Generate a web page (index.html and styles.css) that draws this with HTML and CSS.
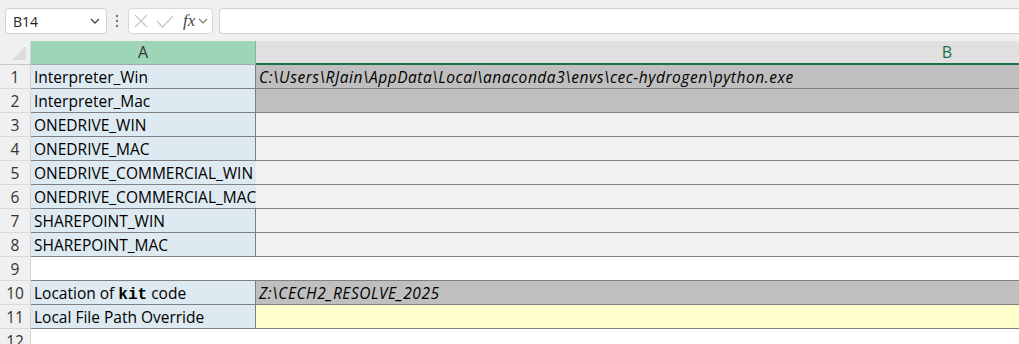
FILE: index.html
```html
<!DOCTYPE html>
<html lang="en">
  <head>
    <meta charset="utf-8">
    <title>Settings sheet</title>
    <link rel="stylesheet" href="styles.css">
  </head>
  <body>
    <!-- name box + formula bar -->
    <div class="toolbar">
      <div class="namebox">
        <span>B14</span>
        <svg class="chev" width="10" height="6" viewBox="0 0 10 6"><path d="M1 1l4 4 4-4" fill="none" stroke="#444" stroke-width="1.3"/></svg>
      </div>
      <svg class="grip" width="4" height="14" viewBox="0 0 4 14"><circle cx="2" cy="2" r="1.2" fill="#777"/><circle cx="2" cy="7" r="1.2" fill="#777"/><circle cx="2" cy="12" r="1.2" fill="#777"/></svg>
      <div class="fnbox">
        <svg width="14" height="14" viewBox="0 0 14 14"><path d="M1 1l12 12M13 1L1 13" stroke="#c4c4c4" stroke-width="1.2"/></svg>
        <svg width="18" height="13" viewBox="0 0 18 13"><path d="M1 6l5.5 6L17 1" fill="none" stroke="#c4c4c4" stroke-width="1.2"/></svg>
        <span class="fx">fx</span>
        <svg width="10" height="6" viewBox="0 0 10 6"><path d="M1 1l4 4 4-4" fill="none" stroke="#777" stroke-width="1.1"/></svg>
      </div>
      <div class="formula"></div>
    </div>

    <div class="sheet">
      <div class="row head">
        <div class="rh corner"><svg width="14" height="14" viewBox="0 0 14 14"><path d="M14 0v14H0z" fill="#dcdcdc"/></svg></div>
        <div class="ch a">A</div>
        <div class="ch b sel">B</div>
      </div>
      <div class="row">
        <div class="rh">1</div>
        <div class="cell a">Interpreter_Win</div>
        <div class="cell b grey path">C:\Users\RJain\AppData\Local\anaconda3\envs\cec-hydrogen\python.exe</div>
      </div>
      <div class="row">
        <div class="rh">2</div>
        <div class="cell a">Interpreter_Mac</div>
        <div class="cell b grey"></div>
      </div>
      <div class="row">
        <div class="rh">3</div>
        <div class="cell a">ONEDRIVE_WIN</div>
        <div class="cell b"></div>
      </div>
      <div class="row">
        <div class="rh">4</div>
        <div class="cell a">ONEDRIVE_MAC</div>
        <div class="cell b"></div>
      </div>
      <div class="row">
        <div class="rh">5</div>
        <div class="cell a spill">ONEDRIVE_COMMERCIAL_WIN</div>
        <div class="cell b"></div>
      </div>
      <div class="row">
        <div class="rh">6</div>
        <div class="cell a spill">ONEDRIVE_COMMERCIAL_MAC</div>
        <div class="cell b"></div>
      </div>
      <div class="row">
        <div class="rh">7</div>
        <div class="cell a">SHAREPOINT_WIN</div>
        <div class="cell b"></div>
      </div>
      <div class="row">
        <div class="rh">8</div>
        <div class="cell a">SHAREPOINT_MAC</div>
        <div class="cell b"></div>
      </div>
      <div class="row">
        <div class="rh">9</div>
        <div class="cell a blank"></div>
        <div class="cell b blank"></div>
      </div>
      <div class="row">
        <div class="rh">10</div>
        <div class="cell a">Location of <code>kit</code> code</div>
        <div class="cell b grey path">Z:\CECH2_RESOLVE_2025</div>
      </div>
      <div class="row">
        <div class="rh">11</div>
        <div class="cell a">Local File Path Override</div>
        <div class="cell b yellow"></div>
      </div>
      <div class="row">
        <div class="rh">12</div>
        <div class="cell a blank nb"></div>
        <div class="cell b blank nb"></div>
      </div>
    </div>
  </body>
</html>
```

FILE: styles.css
```css
body {
  margin: 0;
  background-color: #fff;
  font-family: "Open Sans", sans-serif;
  color: #000;
  overflow: hidden;
}

/* top bar */
.toolbar {
  display: flex;
  align-items: flex-start;
  height: 41px;
  padding: 8px 0 0 5px;
  box-sizing: border-box;
  background-color: #f0f0f0;
}

.namebox {
  display: flex;
  align-items: center;
  justify-content: space-between;
  width: 102px;
  height: 26px;
  box-sizing: border-box;
  padding: 0 6px 0 7px;
  background-color: #fff;
  border: 1px solid #d0d0d0;
  border-radius: 4px;
  font-size: 14px;
  color: #222;
}

.grip {
  margin: 6px 9px 0 8px;
}

.fnbox {
  display: flex;
  align-items: center;
  gap: 8px;
  width: 85px;
  height: 26px;
  box-sizing: border-box;
  padding: 0 0 0 5px;
  background-color: #fff;
  border: 1px solid #d8d8d8;
  border-radius: 4px;
}

.fnbox .fx {
  font-family: "Liberation Serif", serif;
  font-style: italic;
  font-size: 17px;
  color: #444;
  margin-left: 1px;
  margin-right: -5px;
}

.formula {
  flex: 1;
  height: 26px;
  margin-left: 6px;
  box-sizing: border-box;
  background-color: #fff;
  border: 1px solid #d0d0d0;
  border-right: none;
  border-radius: 4px 0 0 4px;
}

/* grid */
.sheet {
  width: 100%;
  overflow: hidden;
}

.row {
  display: flex;
  height: 24px;
}

.rh {
  flex-shrink: 0;
  width: 31px;
  box-sizing: border-box;
  border-right: 1px solid #d4d4d4;
  border-bottom: 1px solid #d9d9d9;
  background-color: #f0f0f0;
  text-align: center;
  font-size: 15.5px;
  line-height: 24px;
  color: #333;
}

.corner {
  display: flex;
  align-items: flex-end;
  justify-content: flex-end;
  padding: 0 4px 4px 0;
  border-bottom: 1px solid #c8c8c8;
}

.ch {
  flex-shrink: 0;
  box-sizing: border-box;
  text-align: center;
  font-size: 16px;
  line-height: 22px;
  color: #333;
}

.ch.a {
  width: 225px;
  background-color: #9fd5b7;
  border-right: 1px solid #8fb09d;
  border-bottom: 1px solid #a8a8a8;
}

.ch.b {
  width: 1378px;
  background-color: #e0e0e0;
  border-bottom: 2px solid #1e7145;
  line-height: 22px;
  padding-left: 4px;
}

.ch.sel {
  color: #1e7145;
}

.cell {
  flex-shrink: 0;
  box-sizing: border-box;
  padding: 1px 0 0 3px;
  border-bottom: 1px solid #808080;
  font-size: 15.5px;
  line-height: 22px;
  white-space: nowrap;
  overflow: hidden;
}

.cell.a {
  width: 225px;
  background-color: #deeaf1;
  border-right: 1px solid #808080;
}

.cell.b {
  width: 1378px;
  background-color: #f2f2f2;
}

.cell.a.spill {
  border-right: none;
  overflow: visible;
  position: relative;
  z-index: 1;
}

.cell.grey {
  background-color: #bfbfbf;
}

.cell.yellow {
  background-color: #ffffcc;
}

.cell.blank {
  background-color: #fff;
  border-right: none;
}

.cell.nb {
  border-bottom: none;
}

.path {
  font-style: italic;
  font-size: 15.5px;
  letter-spacing: 0.55px;
}

code {
  font-family: "Liberation Mono", monospace;
  font-weight: bold;
  font-size: 16px;
}
```
